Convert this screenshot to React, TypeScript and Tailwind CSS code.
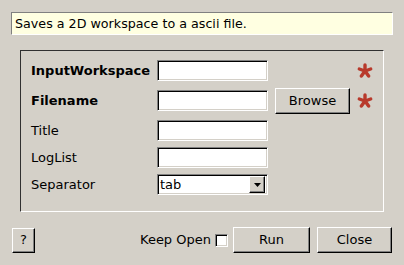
const sunken =
  "bg-white border border-t-[#808080] border-l-[#808080] border-b-white border-r-white shadow-[inset_1px_1px_0_#000,inset_-1px_-1px_0_#d4d0c8]";
const raised =
  "bg-[#d4d0c8] border border-t-white border-l-white border-b-black border-r-black shadow-[inset_-1px_-1px_0_#808080]";

const Asterisk = () => (
  <svg width="16" height="15" viewBox="0 0 16 15">
    <g stroke="#b8392b" strokeWidth="3.4" strokeLinecap="round">
      <line x1="8" y1="8" x2="8" y2="2" />
      <line x1="8" y1="8" x2="2.3" y2="6" />
      <line x1="8" y1="8" x2="13.7" y2="6" />
      <line x1="8" y1="8" x2="4.4" y2="13" />
      <line x1="8" y1="8" x2="11.6" y2="13" />
    </g>
  </svg>
);

interface RowProps {
  label: string;
  bold?: boolean;
  browse?: boolean;
  required?: boolean;
  combo?: string;
  tall?: boolean;
}

const Row = ({ label, bold, browse, required, combo, tall }: RowProps) => (
  <div className={`flex items-center ${tall ? "h-[27px]" : "h-[21px]"}`}>
    <span className={`w-[126px] whitespace-nowrap ${bold ? "font-bold" : ""}`}>{label}</span>
    {combo ? (
      <div className={`${sunken} w-[111px] h-[21px] flex items-center pl-[2px] pr-[2px]`}>
        <span className="flex-1 leading-none">{combo}</span>
        <div className={`${raised} w-[16px] h-[17px] flex items-center justify-center`}>
          <svg width="7" height="4" viewBox="0 0 7 4">
            <path d="M0 0h7L3.5 4z" fill="#000" />
          </svg>
        </div>
      </div>
    ) : (
      <div className={`${sunken} w-[111px] h-[21px]`} />
    )}
    <div className="w-[75px] ml-[7px]">
      {browse && (
        <button className={`${raised} w-[75px] h-[26px] flex items-center justify-center`}>
          Browse
        </button>
      )}
    </div>
    <div className="ml-[7px] w-[16px] flex items-center">{required && <Asterisk />}</div>
  </div>
);

export default function App() {
  return (
    <div
      className="w-[404px] h-[265px] bg-[#d4d0c8] text-[13px] text-black overflow-hidden"
      style={{ fontFamily: '"DejaVu Sans", sans-serif' }}
    >
      <div className="pt-[12px] pl-[11px]">
        <div className="w-[382px] h-[23px] bg-[#ffffe1] border border-t-[#808080] border-l-[#808080] border-b-white border-r-white flex items-center pl-[3px] text-[12.7px]">
          Saves a 2D workspace to a ascii file.
        </div>
      </div>

      <div className="mt-[15px] ml-[20px] w-[364px] h-[162px] border border-t-[#303030] border-l-[#303030] border-b-white border-r-white pt-[9px] pl-[10px] flex flex-col gap-[6px]">
        <Row label="InputWorkspace" bold required />
        <Row label="Filename" bold browse required tall />
        <Row label="Title" />
        <Row label="LogList" />
        <Row label="Separator" combo="tab" />
      </div>

      <div className="mt-[15px] flex items-center h-[26px]">
        <button className={`${raised} ml-[12px] w-[23px] h-[25px] flex items-center justify-center`}>?</button>
        <span className="ml-[105px] w-[74px] whitespace-nowrap">Keep Open</span>
        <div className={`${sunken} ml-[1px] w-[13px] h-[13px]`} />
        <button className={`${raised} ml-[5px] w-[77px] h-[26px] flex items-center justify-center`}>Run</button>
        <button className={`${raised} ml-[7px] w-[75px] h-[26px] flex items-center justify-center`}>Close</button>
      </div>
    </div>
  );
}
